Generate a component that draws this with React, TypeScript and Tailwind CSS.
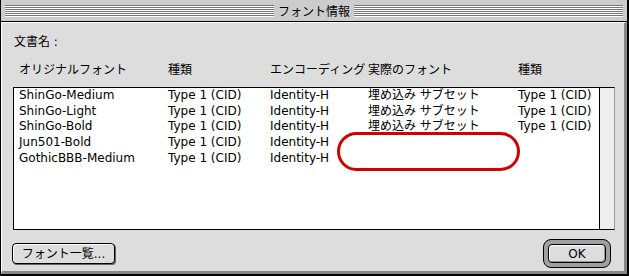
import React from "react";

const rows = [
  ["ShinGo-Medium", "Type 1 (CID)", "Identity-H", "埋め込み サブセット", "Type 1 (CID)"],
  ["ShinGo-Light", "Type 1 (CID)", "Identity-H", "埋め込み サブセット", "Type 1 (CID)"],
  ["ShinGo-Bold", "Type 1 (CID)", "Identity-H", "埋め込み サブセット", "Type 1 (CID)"],
  ["Jun501-Bold", "Type 1 (CID)", "Identity-H", "", ""],
  ["GothicBBB-Medium", "Type 1 (CID)", "Identity-H", "", ""],
];

function Stripes() {
  return (
    <div className="flex-1 flex flex-col">
      <div className="h-[2px] border-t border-[#777777] bg-white" />
      <div className="h-[2px] border-t border-[#777777] bg-white" />
      <div className="h-[2px] border-t border-[#777777] bg-white" />
      <div className="h-[2px] border-t border-[#777777] bg-white" />
      <div className="h-[2px] border-t border-[#777777] bg-white" />
      <div className="h-[2px] border-t border-[#777777] bg-white" />
    </div>
  );
}

function Cells({ cells }: { cells: string[] }) {
  return (
    <>
      <div className="w-[149px] whitespace-nowrap">{cells[0]}</div>
      <div className="w-[102px] whitespace-nowrap">{cells[1]}</div>
      <div className="w-[98px] whitespace-nowrap">{cells[2]}</div>
      <div className="w-[150px] whitespace-nowrap">{cells[3]}</div>
      <div className="flex-1 whitespace-nowrap">{cells[4]}</div>
    </>
  );
}

export default function App() {
  return (
    <div className="relative w-[629px] h-[276px] bg-[#dddddd] border-l border-r-2 border-b-2 border-black flex flex-col overflow-hidden text-[12px] text-black font-['DejaVu_Sans','Noto_Sans_CJK_JP',sans-serif]">
      {/* Title bar */}
      <div className="h-[22px] shrink-0 bg-[#cccccc] border-b border-black flex items-center px-[4px]">
        <Stripes />
        <div className="px-[4px] leading-[16px] font-['Noto_Sans_CJK_JP',sans-serif]">フォント情報</div>
        <Stripes />
      </div>

      {/* Body */}
      <div className="flex-1 flex flex-col border-t border-l border-white border-r-[3px] border-b-[3px] border-r-[#888888] border-b-[#888888] pl-[11px] pr-[9px] pt-[11px]">
        <div className="h-[16px] leading-[16px] ml-px">文書名 :</div>

        <div className="mt-[12px] h-[16px] leading-[16px] flex pl-[6px]">
          <Cells cells={["オリジナルフォント", "種類", "エンコーディング", "実際のフォント", "種類"]} />
        </div>

        <div className="mt-[9px] h-[143px] flex border border-black border-r-[#999999] bg-white">
          <div className="flex-1 flex flex-col">
            {rows.map((r, i) => (
              <div key={i} className="h-[15.7px] leading-[15.7px] flex items-center pl-[5px]">
                <Cells cells={r} />
              </div>
            ))}
          </div>
          <div className="w-[15px] bg-[#eeeeee] border-l border-black" />
        </div>

        <div className="mt-[9px] h-[29px] flex items-center justify-between">
          <div className="-ml-px w-[103px] h-[21px] rounded-[4px] border border-black bg-[#dddddd] shadow-[1px_1px_0_#666666,inset_1px_1px_0_#ffffff] flex items-center justify-center leading-none">
            フォント一覧...
          </div>
          <div className="mr-[4px] w-[68px] h-[29px] rounded-[8px] border border-black bg-[#a0a0a0] p-[4px]">
            <div className="w-full h-full rounded-[4px] border border-black bg-[#dddddd] shadow-[inset_1px_1px_0_#ffffff,inset_-1px_-1px_0_#999999] flex items-center justify-center leading-none">
              OK
            </div>
          </div>
        </div>
      </div>

      {/* Red annotation */}
      <div className="absolute left-[336px] top-[132px] w-[183px] h-[39px] rounded-full border-[3px] border-[#d40000]" />
    </div>
  );
}
